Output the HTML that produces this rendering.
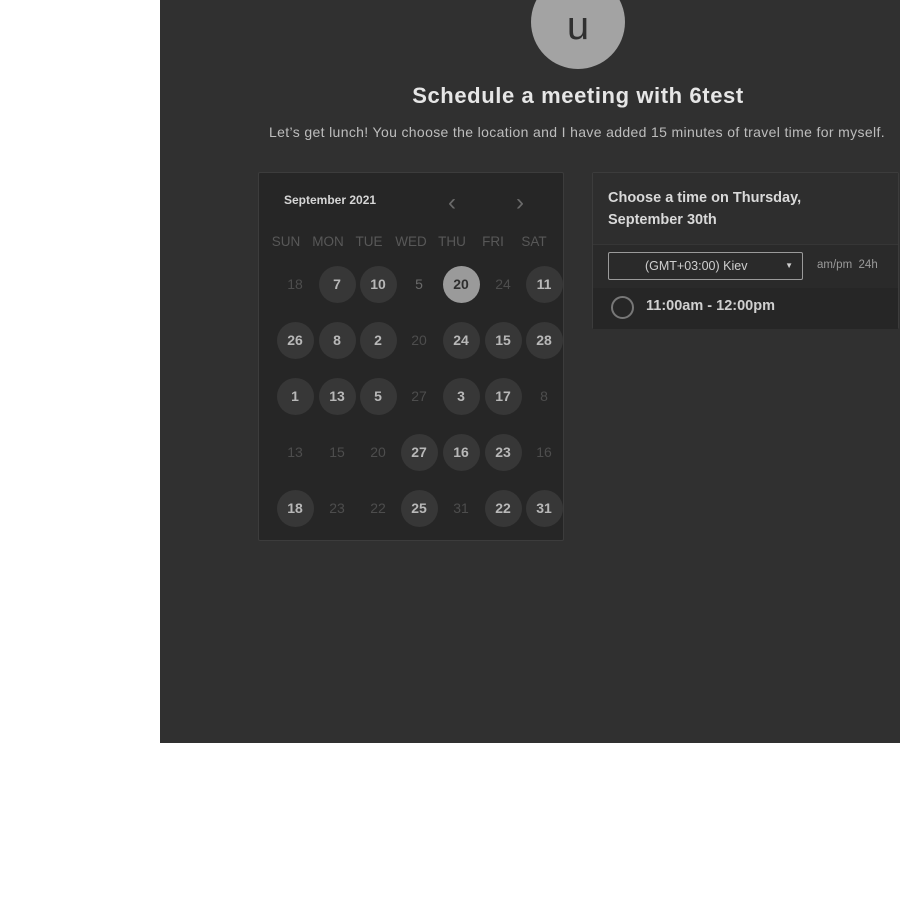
<!DOCTYPE html>
<html><head><meta charset="utf-8"><style>
*{margin:0;padding:0;box-sizing:border-box}
body{width:900px;height:900px;background:#fff;position:relative;overflow:hidden;font-family:"Liberation Sans",sans-serif}
#dark{position:absolute;left:160px;top:0;width:740px;height:743px;background:#303030}
.abs{position:absolute}
#av{left:531px;top:-25px;width:94px;height:94px;border-radius:50%;background:#a3a3a3;color:#303030;font-size:40px;text-align:center;line-height:94px;padding-top:4px}
h1{position:absolute;left:378px;width:400px;top:83px;text-align:center;color:#e6e6e6;font-size:22px;font-weight:bold;letter-spacing:0.6px;white-space:nowrap}
#sub{left:227px;width:700px;top:124px;text-align:center;color:#bdbdbd;font-size:14px;letter-spacing:0.35px;white-space:nowrap}
#cal{left:258px;top:172px;width:306px;height:369px;background:#262626;border:1px solid #3c3c3c;border-radius:2px}
#mon{left:284px;top:193px;color:#d6d6d6;font-size:12px;font-weight:bold}
.arr{color:#6a6a6a;font-size:24px;top:189px}
.dh{top:234px;color:#585858;font-size:13.5px;width:42px;text-align:center;margin-left:-21px}
.d{width:37px;height:37px;margin:-18.5px 0 0 -18.5px;border-radius:50%;text-align:center;line-height:37px;font-size:14px}
.on{background:#373737;color:#b8b8b8;font-weight:bold}
.off{color:#4d4d4d}
.sel{background:#9a9a9a;color:#2e2e2e;font-weight:bold}
#rp{left:592px;top:172px;width:307px;height:157px;background:#2a2a2a;border:1px solid #3c3c3c;border-radius:2px;overflow:hidden}
#rh{left:0;top:0;width:100%;height:72px;background:#2e2e2e;border-bottom:1px solid #363636;color:#d9d9d9;font-weight:bold;font-size:14.5px;line-height:22px;padding:14px 15px}
#dd{left:608px;top:252px;width:195px;height:28px;border:1px solid #9a9a9a;border-radius:2px;color:#cfcfcf;font-size:12.5px;line-height:26px;padding-left:36px}
#slot{left:593px;top:288px;width:305px;height:41px;background:#262626}
</style></head><body>
<div id="dark"></div>
<div id="av" class="abs">u</div>
<h1>Schedule a meeting with 6test</h1>
<div id="sub" class="abs">Let’s get lunch! You choose the location and I have added 15 minutes of travel time for myself.</div>
<div id="cal" class="abs"></div>
<div id="mon" class="abs">September 2021</div>
<div class="abs arr" style="left:448px">&#8249;</div>
<div class="abs arr" style="left:516px">&#8250;</div>
<div class="abs dh" style="left:286px">SUN</div>
<div class="abs dh" style="left:328px">MON</div>
<div class="abs dh" style="left:369px">TUE</div>
<div class="abs dh" style="left:411px">WED</div>
<div class="abs dh" style="left:452px">THU</div>
<div class="abs dh" style="left:493px">FRI</div>
<div class="abs dh" style="left:534px">SAT</div>

<div class="abs d off" style="left:295px;top:284px">18</div>
<div class="abs d on" style="left:337px;top:284px">7</div>
<div class="abs d on" style="left:378px;top:284px">10</div>
<div class="abs d off" style="left:419px;top:284px;color:#6a6a6a">5</div>
<div class="abs d sel" style="left:461px;top:284px">20</div>
<div class="abs d off" style="left:503px;top:284px">24</div>
<div class="abs d on" style="left:544px;top:284px">11</div>

<div class="abs d on" style="left:295px;top:340px">26</div>
<div class="abs d on" style="left:337px;top:340px">8</div>
<div class="abs d on" style="left:378px;top:340px">2</div>
<div class="abs d off" style="left:419px;top:340px">20</div>
<div class="abs d on" style="left:461px;top:340px">24</div>
<div class="abs d on" style="left:503px;top:340px">15</div>
<div class="abs d on" style="left:544px;top:340px">28</div>

<div class="abs d on" style="left:295px;top:396px">1</div>
<div class="abs d on" style="left:337px;top:396px">13</div>
<div class="abs d on" style="left:378px;top:396px">5</div>
<div class="abs d off" style="left:419px;top:396px">27</div>
<div class="abs d on" style="left:461px;top:396px">3</div>
<div class="abs d on" style="left:503px;top:396px">17</div>
<div class="abs d off" style="left:544px;top:396px">8</div>

<div class="abs d off" style="left:295px;top:452px">13</div>
<div class="abs d off" style="left:337px;top:452px">15</div>
<div class="abs d off" style="left:378px;top:452px">20</div>
<div class="abs d on" style="left:419px;top:452px">27</div>
<div class="abs d on" style="left:461px;top:452px">16</div>
<div class="abs d on" style="left:503px;top:452px">23</div>
<div class="abs d off" style="left:544px;top:452px">16</div>

<div class="abs d on" style="left:295px;top:508px">18</div>
<div class="abs d off" style="left:337px;top:508px">23</div>
<div class="abs d off" style="left:378px;top:508px">22</div>
<div class="abs d on" style="left:419px;top:508px">25</div>
<div class="abs d off" style="left:461px;top:508px">31</div>
<div class="abs d on" style="left:503px;top:508px">22</div>
<div class="abs d on" style="left:544px;top:508px">31</div>

<div id="rp" class="abs"><div id="rh" class="abs">Choose a time on Thursday,<br>September 30th</div></div>
<div id="dd" class="abs">(GMT+03:00) Kiev<span style="position:absolute;right:9px;top:0;font-size:8px">&#9660;</span></div>
<div class="abs" style="left:817px;top:259px;color:#9a9a9a;font-size:11.5px">am/pm&nbsp; 24h</div>
<div id="slot" class="abs"></div>
<div class="abs" style="left:611px;top:296px;width:23px;height:23px;border-radius:50%;border:2px solid #777"></div>
<div class="abs" style="left:646px;top:298px;color:#d0d0d0;font-weight:bold;font-size:14.5px">11:00am - 12:00pm</div>
</body></html>
